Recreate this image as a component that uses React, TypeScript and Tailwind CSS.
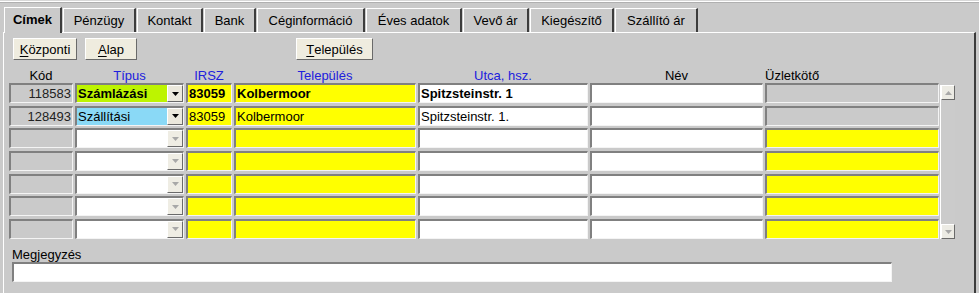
import React from "react";

const sunken =
  "border-t-2 border-l-2 border-b border-r border-t-[#808080] border-l-[#808080] border-b-[#f4f4f4] border-r-[#f4f4f4]";
const raised =
  "border border-t-white border-l-white border-b-[#6a6a6a] border-r-[#6a6a6a]";

const tabs = [
  { label: "Címek", w: "w-[58px]", active: true },
  { label: "Pénzügy", w: "w-[73px]" },
  { label: "Kontakt", w: "w-[66px]" },
  { label: "Bank", w: "w-[52px]" },
  { label: "Céginformáció", w: "w-[108px]" },
  { label: "Éves adatok", w: "w-[96px]" },
  { label: "Vevő ár", w: "w-[66px]" },
  { label: "Kiegészítő", w: "w-[84px]" },
  { label: "Szállító ár", w: "w-[83px]" },
];

type Row = {
  kod: string;
  tipus: string;
  tipusBg: string;
  irsz: string;
  telep: string;
  utca: string;
  bold: boolean;
  filled: boolean;
};

const rows: Row[] = [
  { kod: "118583", tipus: "Számlázási", tipusBg: "bg-[#bdf400]", irsz: "83059", telep: "Kolbermoor", utca: "Spitzsteinstr. 1", bold: true, filled: true },
  { kod: "128493", tipus: "Szállítási", tipusBg: "bg-[#8ad9f6]", irsz: "83059", telep: "Kolbermoor", utca: "Spitzsteinstr. 1.", bold: false, filled: true },
  ...Array.from({ length: 5 }, () => ({ kod: "", tipus: "", tipusBg: "bg-white", irsz: "", telep: "", utca: "", bold: false, filled: false })),
];

function Arrow({ up, color }: { up?: boolean; color: string }) {
  return (
    <svg width="7" height="4" viewBox="0 0 7 4">
      <path d={up ? "M0 4 L3.5 0 L7 4 Z" : "M0 0 L7 0 L3.5 4 Z"} fill={color} />
    </svg>
  );
}

function Btn({ u, rest, w }: { u: string; rest: string; w: string }) {
  return (
    <div className={`${w} h-[22px] ${raised} bg-[#efecdf] flex items-center justify-center text-[13px] leading-none`}>
      <span className="underline underline-offset-2">{u}</span>
      {rest}
    </div>
  );
}

export default function App() {
  return (
    <div
      className="w-[979px] h-[293px] overflow-hidden bg-[#cacaca] text-black text-[13px]"
      style={{ fontFamily: '"Liberation Sans", Arial, sans-serif' }}
    >
      {/* window edge */}
      <div className="h-[1px] bg-[#d8d8d8]" />
      <div className="h-[1px] bg-white" />
      <div className="h-[1px] bg-[#b0b0b0]" />

      {/* tabs */}
      <div className="mt-[5px] h-[24px] flex items-end pl-[4px] gap-[1px]">
        {tabs.map((t) => (
          <div
            key={t.label}
            className={`${t.w} flex items-center justify-center border-t border-l border-t-white border-l-white border-r-2 border-r-[#3c3c3c] bg-[#cacaca] ${
              t.active ? "relative z-10 h-[26px] -mb-[1px] font-bold pb-[2px]" : "h-[24px]"
            }`}
          >
            {t.label}
          </div>
        ))}
      </div>

      {/* panel */}
      <div className="ml-[3px] w-[973px] h-[300px] border-t border-l border-t-white border-l-white border-r-2 border-r-[#3c3c3c]">
        {/* buttons */}
        <div className="mt-[5px] flex pl-[9px]">
          <Btn u="K" rest="özponti" w="w-[64px]" />
          <div className="ml-[8px]">
            <Btn u="A" rest="lap" w="w-[52px]" />
          </div>
          <div className="ml-[159px]">
            <Btn u="T" rest="elepülés" w="w-[77px]" />
          </div>
        </div>

        {/* column headers */}
        <div className="mt-[8px] h-[15px] flex gap-[2px] pl-[5px] leading-[15px] text-[#2020dd]">
          <div className="w-[64px] text-center text-black">Kód</div>
          <div className="w-[109px] text-center">Típus</div>
          <div className="w-[46px] text-center">IRSZ</div>
          <div className="w-[182px] text-center">Település</div>
          <div className="w-[170px] text-center">Utca, hsz.</div>
          <div className="w-[173px] text-center text-black">Név</div>
          <div className="w-[174px] text-black">Üzletkötő</div>
        </div>

        {/* grid + scrollbar */}
        <div className="flex pl-[5px]">
          <div className="flex flex-col gap-[2.67px]">
            {rows.map((r, i) => (
              <div key={i} className={`flex gap-[2px] h-[20px] leading-[17px] ${r.bold ? "font-bold" : ""}`}>
                <div className={`w-[64px] ${sunken} bg-[#cacaca] text-right pr-[1px] font-normal text-[#222]`}>{r.kod}</div>
                <div className={`w-[109px] ${sunken} ${r.tipusBg} flex`}>
                  <div className="flex-1 pl-[1px] overflow-hidden whitespace-nowrap">{r.tipus}</div>
                  <div className={`w-[16px] h-full ${raised} ${r.filled ? "bg-[#ebe8dc]" : "bg-[#efede4]"} flex items-center justify-center`}>
                    <Arrow color={r.filled ? "#000" : "#a8a8a8"} />
                  </div>
                </div>
                <div className={`w-[46px] ${sunken} bg-[#ffff00] pl-[1px]`}>{r.irsz}</div>
                <div className={`w-[182px] ${sunken} bg-[#ffff00] pl-[1px]`}>{r.telep}</div>
                <div className={`w-[170px] ${sunken} bg-white pl-[1px]`}>{r.utca}</div>
                <div className={`w-[173px] ${sunken} bg-white`} />
                <div className={`w-[174px] ${sunken} ${r.filled ? "bg-[#cacaca]" : "bg-[#ffff00]"}`} />
              </div>
            ))}
          </div>
          <div className="ml-[1px] mt-[2px] w-[15px] h-[154px] flex flex-col border-l border-l-white bg-[#cbcbcb]">
            <div className={`h-[15px] ${raised} bg-[#ecebe4] flex items-center justify-center`}>
              <Arrow up color="#a8a8a8" />
            </div>
            <div className="flex-1" />
            <div className={`h-[15px] ${raised} bg-[#ecebe4] flex items-center justify-center`}>
              <Arrow color="#a8a8a8" />
            </div>
          </div>
        </div>

        {/* note */}
        <div className="mt-[8px] ml-[8px] h-[15px] leading-[15px]">Megjegyzés</div>
        <div className={`ml-[8px] w-[880px] h-[20px] ${sunken} bg-white`} />
      </div>
    </div>
  );
}
